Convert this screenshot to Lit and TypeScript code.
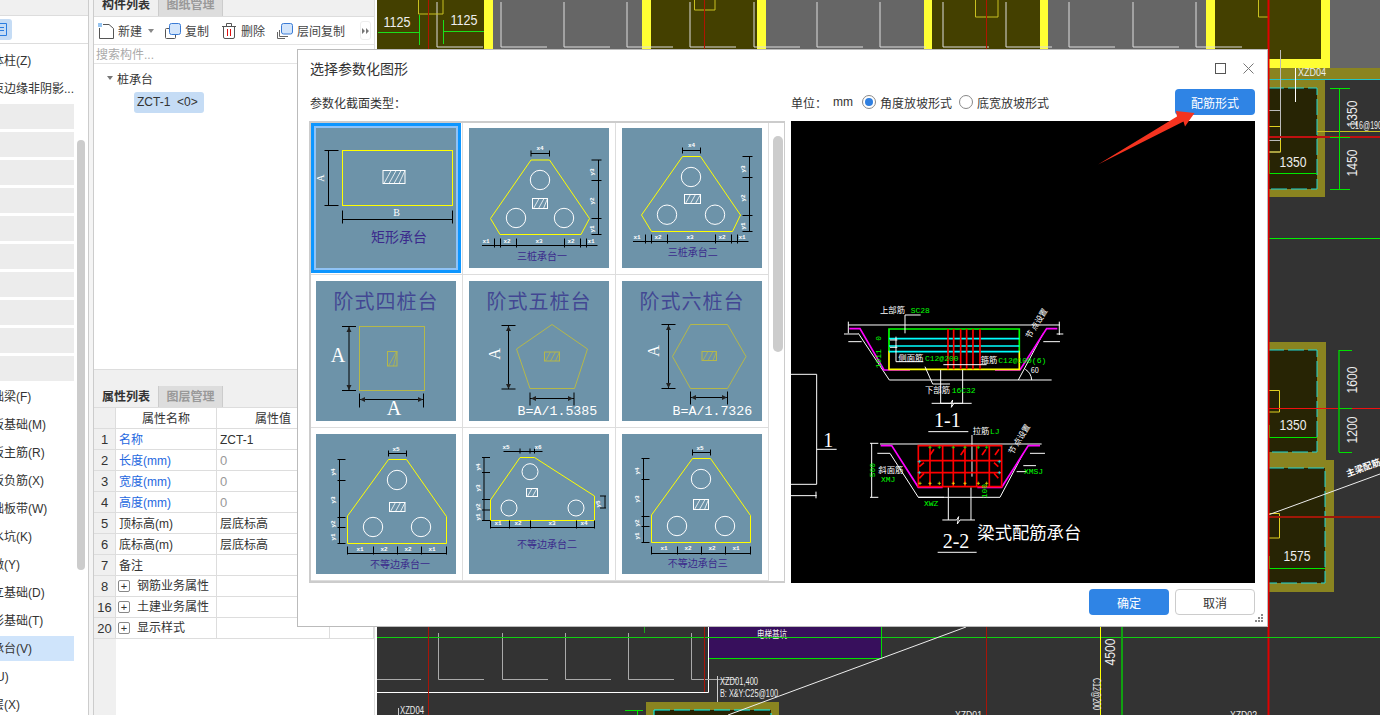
import { LitElement, html, css, svg } from 'lit';
import { customElement } from 'lit/decorators.js';

const NAV_TOP = ['砌体柱(Z)', '约束边缘非阴影...'];
const NAV_BOTTOM = [
  '基础梁(F)', '筏板基础(M)', '筏板主筋(R)', '筏板负筋(X)', '基础板带(W)', '集水坑(K)',
  '柱墩(Y)', '独立基础(D)', '条形基础(T)', '桩承台(V)', '桩(U)', '垫层(X)',
];

const PROPS = [
  { no: 1, name: '名称', value: 'ZCT-1', blue: true },
  { no: 2, name: '长度(mm)', value: '0', blue: true, muted: true },
  { no: 3, name: '宽度(mm)', value: '0', blue: true, muted: true },
  { no: 4, name: '高度(mm)', value: '0', blue: true, muted: true },
  { no: 5, name: '顶标高(m)', value: '层底标高' },
  { no: 6, name: '底标高(m)', value: '层底标高' },
  { no: 7, name: '备注', value: '' },
  { no: 8, name: '钢筋业务属性', value: '', group: true },
  { no: 16, name: '土建业务属性', value: '', group: true },
  { no: 20, name: '显示样式', value: '', group: true },
];

// --- thumbnail drawing helpers, coordinates are inside the 140x140 picture
const hdim = (y: number, x1: number, x2: number, ticks: number[], up = 6, down = 2) => svg`
  <path class="dim" d="M${x1} ${y}H${x2}${ticks.map((t) => `M${t} ${y - up}V${y + down}`).join('')}" />`;
const vdim = (x: number, y1: number, y2: number, ticks: number[], left = 7, right = 3) => svg`
  <path class="dim" d="M${x} ${y1}V${y2}${ticks.map((t) => `M${x - left} ${t}H${x + right}`).join('')}" />`;
const lab = (x: number, y: number, t: string, rot = false) => svg`
  <text class="tiny" x=${x} y=${y} text-anchor="middle" transform=${rot ? `rotate(-90 ${x} ${y})` : ''}>${t}</text>`;
const hatch = (x1: number, y1: number, x2: number, y2: number, color = '#fff') => {
  const h = y2 - y1;
  const lean = h * 0.55;
  let d = '';
  for (let x = x1 + 1; x < x2 - 2; x += 5) {
    d += `M${x} ${y2}L${Math.min(x + lean, x2)} ${y1}`;
  }
  return svg`<rect x=${x1} y=${y1} width=${x2 - x1} height=${h} fill="none" stroke=${color} />
    <path d=${d} fill="none" stroke=${color} stroke-width=".8" />`;
};
const shape = (pts: string, circles: number[][], r = 9.7, color = '#ffff00') => svg`
  <polygon points=${pts} fill="none" stroke=${color} />
  ${circles.map(([x, y]) => svg`<circle cx=${x} cy=${y} r=${r} fill="none" stroke="#fff" />`)}`;
const name = (x: number, y: number, t: string, size = 10) => svg`
  <text class="cn" x=${x} y=${y} text-anchor="middle" style="font-size:${size}px">${t}</text>`;
const steptitle = (t: string) => svg`<text class="step" x="70" y="28" text-anchor="middle">${t}</text>`;
const arrows = (x1: number, y1: number, x2: number, y2: number) => svg`
  <path class="arrow" d=${x1 === x2
    ? `M${x1} ${y1}l-2.5 5h5zM${x2} ${y2}l-2.5 -5h5z`
    : `M${x1} ${y1}l5 -2.5v5zM${x2} ${y2}l-5 -2.5v5z`} />`;

const THUMBS = [
  svg`<rect x="26.5" y="22.5" width="110" height="55" fill="none" stroke="#ffff00" />
    ${hatch(67, 42.5, 89, 55.5)}
    ${vdim(12.5, 22.5, 77.5, [22.5, 77.5], 4, 10)}
    ${hdim(91.5, 26.5, 136.5, [26.5, 136.5], 9, 4)}
    <text class="big" x="5" y="53" transform="rotate(-90 5 50)" style="font-size:10px" text-anchor="middle">A</text>
    <text class="big" x="80.5" y="88" style="font-size:10px" text-anchor="middle">B</text>
    ${name(83, 114, '矩形承台', 14)}`,
  svg`${shape('62,32 80.5,32 120.5,90.5 112,106.5 31,106.5 21.5,90.5', [[71, 52], [47, 90], [95, 90]])}
    ${hatch(63.5, 70.5, 78.5, 80.5)}
    ${hdim(25.5, 62, 80.5, [62, 80.5], 3, 3)}${lab(71, 22, 'x4')}
    ${vdim(129.5, 32, 106.5, [32, 52.5, 90.5, 106.5])}
    ${lab(125, 44, 'y3', true)}${lab(125, 73, 'y2', true)}${lab(125, 101, 'y1', true)}
    ${hdim(117.5, 13, 128.5, [25.5, 31.5, 47.5, 95.5, 111.5, 117.5], 7, 2)}
    ${lab(17, 115, 'x1')}${lab(38, 115, 'x2')}${lab(70, 115, 'x3')}${lab(102, 115, 'x2')}${lab(122, 115, 'x1')}
    ${name(73, 132, '三桩承台一')}`,
  svg`${shape('60.5,28.5 78.5,28.5 118.5,87 110.5,103.5 29.5,103.5 19.5,87', [[69, 49], [45, 86.7], [93, 86.7]])}
    ${hatch(62.5, 66.5, 78.5, 75.5)}
    ${hdim(22.5, 60.5, 78.5, [60.5, 78.5], 3, 3)}${lab(69.5, 19, 'x4')}
    ${vdim(127.5, 28.5, 103.5, [28.5, 49.5, 87.5, 103.5])}
    ${lab(123, 41, 'y3', true)}${lab(123, 70, 'y2', true)}${lab(123, 98, 'y1', true)}
    ${hdim(113.5, 11, 126.5, [23.5, 29.5, 45.5, 93.5, 109.5, 115.5], 7, 2)}
    ${lab(15, 111, 'x1')}${lab(36, 111, 'x2')}${lab(68, 111, 'x3')}${lab(100, 111, 'x2')}${lab(120, 111, 'x1')}
    ${name(70.7, 128, '三桩承台二')}`,
  svg`${steptitle('阶式四桩台')}
    <rect x="43.5" y="45.5" width="65" height="64" fill="none" stroke="#b5b84a" />
    ${hatch(71.5, 70.5, 81, 85, '#b5b84a')}
    ${vdim(33, 45.5, 109.5, [45.5, 109.5], 7, 7)}${arrows(33, 46, 33, 109)}
    ${hdim(118.5, 43.5, 107.5, [43.5, 107.5], 6, 8)}${arrows(44, 118.5, 107, 118.5)}
    <text class="big" x="22" y="81" text-anchor="middle">A</text>
    <text class="big" x="78" y="134" text-anchor="middle">A</text>`,
  svg`${steptitle('阶式五桩台')}
    <polygon points="83,43.5 118.5,68 105.5,107.5 61,107.5 47.5,68" fill="none" stroke="#b5b84a" />
    ${hatch(75.5, 71, 90.5, 80, '#b5b84a')}
    ${vdim(39.5, 44.5, 108, [44.5, 108], 7, 7)}${arrows(39.5, 45, 39.5, 108)}
    ${hdim(117.5, 61, 105, [61, 105], 6, 7)}${arrows(62, 117.5, 104, 117.5)}
    <text class="big" x="25" y="79" transform="rotate(-90 25 73)" text-anchor="middle" style="font-size:16px">A</text>
    <text class="form" x="48.5" y="134">B=A/1.5385</text>`,
  svg`${steptitle('阶式六桩台')}
    <polygon points="68.5,43.5 105.5,43.5 124,75.5 105.5,107.5 68.5,107.5 50.5,75.5" fill="none" stroke="#b5b84a" />
    ${hatch(80, 70.5, 94.5, 79.5, '#b5b84a')}
    ${vdim(46.5, 43.5, 107.5, [43.5, 107.5], 7, 7)}${arrows(46.5, 44, 46.5, 107)}
    ${hdim(116.5, 68.5, 105.5, [68.5, 105.5], 6, 7)}${arrows(69, 116.5, 105, 116.5)}
    <text class="big" x="31" y="76" transform="rotate(-90 31 70)" text-anchor="middle" style="font-size:16px">A</text>
    <text class="form" x="50.5" y="134">B=A/1.7326</text>`,
  svg`${shape('72.5,25.5 90.5,25.5 130.5,82.5 130.5,109.5 31.5,109.5 31.5,82', [[81, 46], [57, 93], [105, 93]])}
    ${hatch(73.5, 68.5, 89, 77.5)}
    ${hdim(19.5, 72.5, 90.5, [72.5, 90.5], 3, 3)}${lab(80, 17, 'x5')}
    ${vdim(23.5, 25.5, 109.5, [25.5, 46.5, 83.5, 93.5, 109.5], 2, 6)}
    ${lab(19, 38, 'y4', true)}${lab(19, 66, 'y3', true)}${lab(19, 90, 'y2', true)}${lab(19, 103, 'y1', true)}
    ${hdim(119.5, 31.5, 130.5, [31.5, 57.5, 81.5, 105.5, 130.5], 7, 1)}
    ${lab(44, 117, 'x1')}${lab(68, 117, 'x2')}${lab(92, 117, 'x2')}${lab(116, 117, 'x1')}
    ${name(84, 134, '不等边承台一')}`,
  svg`${shape('51,23.5 65.5,23.5 125.5,62 125.5,86.5 21.5,86.5 21.5,66', [[61, 37.7], [40, 74], [107, 74]], 8)}
    ${hatch(57.5, 54.5, 68.5, 62.5)}
    ${hdim(17.5, 34.5, 73.5, [51, 61, 65.5], 3, 2)}${lab(37, 15, 'x5')}${lab(69, 15, 'x6')}
    ${vdim(136, 62, 74, [62, 74], 5, 1)}${lab(131, 70, 'y5', true)}
    ${vdim(15, 23.5, 86.5, [23.5, 38.5, 65.5, 76, 86.5], 2, 6)}
    ${lab(11, 33, 'y4', true)}${lab(11, 54, 'y3', true)}${lab(11, 73, 'y2', true)}${lab(11, 83, 'y1', true)}
    ${hdim(93.5, 21.5, 125.5, [21.5, 40.5, 61.5, 107.5, 125.5], 7, 1)}
    ${lab(29, 91, 'x1')}${lab(49, 91, 'x2')}${lab(83, 91, 'x3')}${lab(115, 91, 'x4')}
    ${name(78, 114, '不等边承台二')}`,
  svg`${shape('70.5,24.5 88.5,24.5 128.5,81.5 128.5,108.5 29.5,108.5 29.5,81', [[79, 45], [55, 92], [103, 92]])}
    ${hatch(71.5, 65.5, 86.5, 75.5)}
    ${hdim(18.5, 70.5, 88.5, [70.5, 88.5], 3, 3)}${lab(78, 16, 'x5')}
    ${vdim(21.5, 24.5, 108.5, [24.5, 45.5, 82.5, 92.5, 108.5], 2, 6)}
    ${lab(17, 37, 'y4', true)}${lab(17, 65, 'y3', true)}${lab(17, 89, 'y2', true)}${lab(17, 102, 'y1', true)}
    ${hdim(119.5, 29.5, 128.5, [29.5, 55.5, 79.5, 103.5, 128.5], 7, 1)}
    ${lab(42, 116, 'x1')}${lab(66, 116, 'x2')}${lab(90, 116, 'x2')}${lab(114, 116, 'x1')}
    ${name(75.7, 133, '不等边承台三')}`,
];

// --- rebar preview, drawn in a 3x coordinate space
const W = (x: number, y: number, t: string, size = 25) => svg`
  <text class="pw" x=${x} y=${y} style="font-size:${size}px">${t}</text>`;
const G = (x: number, y: number, t: string) => svg`<text class="pg" x=${x} y=${y}>${t}</text>`;
const GR = (x: number, y: number, t: string) => svg`
  <text class="pg" x=${x} y=${y} transform="rotate(-90 ${x} ${y})">${t}</text>`;
const line = (d: string, color = '#fff', w = 3) => svg`
  <path d=${d} fill="none" stroke=${color} stroke-width=${w} />`;
const crosses = (pts: number[][], color: string) => line(
  pts.map(([x, y]) => `M${x - 5} ${y}H${x + 5}M${x} ${y - 5}V${y + 5}`).join(''), color, 2);

const PREVIEW = svg`
  <g transform="translate(-1 169) scale(.3333)">
    ${line('M0 253H80V583H0M80 478H140M0 617H80M78 605V625')}
    <text class="pn" x="100" y="472">1</text>
    ${line('M175 95V130M808 95V135M175 105H810M162 132H205M800 132H820M175 155H215M760 155H810')}
    ${line('M205 130L298 270H785M760 130L685 270')}
    ${line('M178 116H210L282 240H360M802 116H770L690 240H615', '#ff00ff', 5)}
    ${line('M297 183V117H688V183', '#00ff00', 5)}
    ${line('M297 182V238H688V182', '#ffff00', 5)}
    ${line('M297 146H688M297 168H688M297 185H688', '#00ffff', 5)}
    ${line('M474 117V238M491 117V238M512 117V238M530 117V238M549 117V238M570 117V238', '#ff0000', 5)}
    ${line('M345 130V75H392M318 140V215H400M300 172H322M300 150H322M460 224H590M405 230L428 282H480')}
    ${line('M452 240V340H482L488 330L484 352L492 340H518V240M425 340H545')}
    ${line('M725 270A40 40 0 0 0 706 238')}
    ${W(270, 68, '上部筋')}${G(362, 68, 'SC28')}
    ${W(325, 213, '侧面筋')}${G(405, 213, 'C12@200')}
    ${W(572, 218, '箍筋')}${G(625, 218, 'C12@100(6)')}
    ${W(405, 309, '下部筋')}${G(485, 309, '16C32')}
    ${W(722, 250, '60', 22)}
    ${GR(272, 235, '1011')}${GR(272, 152, '0')}
    <text class="pw" x="720" y="148" transform="rotate(-58 720 148)" style="font-size:24px">节 点设置</text>
    <text class="pn" x="432" y="412">1-1</text>
    ${line('M415 425H535')}
    ${line('M270 462H755M300 490L385 622H630L700 490M262 490H300M720 490H765M240 460H265M240 622H265M245 460V622M700 527H738M680 545H710M385 622H462M475 592V690M543 592V690M457 690H500L506 680L502 702L510 690H555M546 435V560')}
    ${line('M272 467H305L385 592H458M750 467H715L635 592H562', '#ff00ff', 5)}
    ${line('M385 467H635V590H385ZM420 467V590M458 467V590M490 467V590M525 467V590M560 467V590M598 467V590M385 512H635M385 548H635', '#ff0000', 5)}
    ${line('M420 495L432 478M512 495L524 478M576 495L588 478M615 495L627 478M388 530L402 518M388 565L402 550M625 530L612 518M625 565L612 550', '#ff0000', 5)}
    ${crosses([[390, 580], [420, 580], [448, 580], [490, 580], [525, 580], [565, 580], [590, 580]], '#ffff00')}
    ${crosses([[420, 472], [448, 472], [490, 472], [525, 472], [565, 472], [590, 472]], '#00ff00')}
    ${crosses([[388, 515], [388, 548], [628, 515], [628, 548]], '#00ffff')}
    ${W(548, 432, '拉筋')}${G(600, 432, 'LJ')}
    ${W(265, 550, '斜面筋')}${G(273, 575, 'XMJ')}${G(702, 553, 'XMSJ')}${G(402, 648, 'XWZ')}
    ${GR(254, 562, '500')}${GR(590, 625, '100')}
    <text class="pw" x="668" y="495" transform="rotate(-58 668 495)" style="font-size:24px">节 点设置</text>
    <text class="pn" x="458" y="774">2-2</text>
    ${line('M443 787H560')}
    ${W(562, 746, '梁式配筋承台', 52)}
  </g>`;

// --- CAD background, drawn in page coordinates
const LS = [437, 501, 564, 627, 690, 754, 817, 880, 943, 1006, 1069, 1133, 1196];
const olive = (x: number, w: number) => svg`<rect x=${x} y="0" width=${w} height="49" fill="#444000" />`;
const bar = (x: number, w: number) => svg`<rect x=${x} y="0" width=${w} height="49" fill="#ffff33" />`;
const num = (x: number, y: number, t: string, rot = false) => svg`
  <text class="cad" x=${x} y=${y} text-anchor="middle" textLength="27" lengthAdjust="spacingAndGlyphs"
    transform=${rot ? `rotate(-90 ${x} ${y})` : ''}>${t}</text>`;
const dashed = (x: number, y: number, w: number, h: number) => svg`
  <rect x=${x} y=${y} width=${w} height=${h} fill="#272404" stroke="#1fd6d6" stroke-dasharray="16 4" />`;

const CANVAS = svg`
  <rect x="377" y="0" width="1003" height="715" fill="#333" />
  <rect x="493" y="0" width="149" height="49" fill="#666" />
  <rect x="766" y="0" width="158" height="49" fill="#666" />
  <rect x="1048" y="0" width="158" height="49" fill="#666" />
  ${olive(377, 107)}${olive(651, 106)}${olive(932, 108)}${olive(1215, 60)}
  ${bar(484, 9)}${bar(642, 9)}${bar(757, 9)}${bar(924, 8)}${bar(1040, 8)}${bar(1206, 9)}
  <path d=${LS.map((x) => `M${x} 2V47H${x + 46}`).join('')} fill="none" stroke="#ddd" />
  <path d="M418.500 0V14H443V0M694.500 0V10H715V0M975.500 0V17H998V0M1258.500 0V17H1275" fill="none" stroke="#c8c020" />
  <path d="M428.500 0V49M704.500 0V49M986.500 0V49" stroke="#b01400" fill="none" />
  <path d="M378 32.500H419M419.500 15V45M443 31.500H484M443.500 20V44" stroke="#1be01b" fill="none" />
  ${num(397, 27, '1125')}${num(464, 25, '1125')}

  <rect x="1268" y="0" width="112" height="70" fill="#666" />
  <rect x="1268" y="0" width="62" height="68" fill="#ffff33" />
  <rect x="1268" y="0" width="53" height="59" fill="#444000" />
  <rect x="1268" y="68" width="112" height="11" fill="#8a8420" />
  <rect x="1268" y="79" width="57" height="118" fill="#8a8420" />
  <path d="M1268 79.500H1380" stroke="#25c5c5" />
  ${dashed(1268, 88, 49, 101)}
  <path d="M1280.500 50V152H1268M1268 110.500H1280M1268 140.500H1280" stroke="#bbb" fill="none" />
  <path d="M1268 126.500H1280M1280.500 140V152H1268" stroke="#e0d020" fill="none" />
  <path d="M1295.500 68V102" stroke="#fff" />
  <path d="M1317 131.500H1380" stroke="#c8c020" />
  <path d="M1268 173.500H1317M1269.500 160V173" stroke="#00e800" />
  <path d="M1268 137H1380" stroke="#c01010" stroke-width="2" />
  <path d="M1339.500 88V189M1330 88.500H1350M1330 137.500H1350M1330 189.500H1350" stroke="#00e800" fill="none" />
  <text class="cads" x="1298" y="76" textLength="28" lengthAdjust="spacingAndGlyphs">XZD04</text>
  <text class="cads" x="1350" y="129" textLength="32" lengthAdjust="spacingAndGlyphs">C16@190</text>
  ${num(1293, 167, '1350')}
  ${num(1357, 114, '1350', true)}${num(1357, 163, '1450', true)}

  <path d="M1268 238.500H1380" stroke="#00f000" />
  <path d="M1268 342H1326V460H1334V592H1268Z" fill="#8a8420" />
  ${dashed(1268, 350, 49, 102)}${dashed(1268, 468, 57, 115)}
  <path d="M1268 390.500H1279.500V412H1268M1268 513.500H1279.500V538H1268" stroke="#e0d020" fill="none" />
  <path d="M1268 437.500H1317M1268 568.500H1325M1269.500 425V437M1269.500 556V568" stroke="#00e800" fill="none" />
  <path d="M1268 408.500H1380" stroke="#f01010" />
  <path d="M1268 517H1380" stroke="#a01808" stroke-width="2" />
  <path d="M1339 350V452" stroke="#0fa00f" stroke-width="2" />
  <path d="M1339 350.500H1352M1339 408.500H1352M1339 452.500H1352" stroke="#00e000" fill="none" />
  <path d="M1268 515L1380 474" stroke="#eee" />
  <text class="cadb" x="1363" y="471" text-anchor="middle" transform="rotate(-20 1363 467)">主梁配筋</text>
  ${num(1293, 430, '1350')}${num(1297, 561, '1575')}
  ${num(1357, 380, '1600', true)}${num(1357, 430, '1200', true)}
  <path d="M1268.500 0V715" stroke="#e00000" stroke-width="2" />

  <rect x="708" y="627" width="173" height="31" fill="#370f5c" />
  <path d="M708 658.500H881.500V627" stroke="#00e000" fill="none" />
  <text class="cads" x="772" y="638" text-anchor="middle" textLength="30" lengthAdjust="spacingAndGlyphs">电梯基坑</text>
  <path d="M377 692.500H708.500V627" stroke="#fff" fill="none" />
  <path d="M377 679.500H421${LS.slice(0, 5).map((x) => `M${x + 1}.5 633V679.500H${x + 47}`).join('')}" stroke="#aaa" fill="none" />
  <path d="M377 637.500H1380" stroke="#10d010" />
  <path d="M428.500 627V715M704.500 627V692M986.500 627V715" stroke="#a81408" fill="none" />
  <path d="M1100.500 627V715" stroke="#ffff00" />
  <path d="M1122 627V715" stroke="#10a010" stroke-width="2" />
  <path d="M644.500 627V633" stroke="#1baa1b" />
  ${num(1115, 652, '4500', true)}
  <text class="cads" x="1097" y="690" text-anchor="middle" textLength="32" lengthAdjust="spacingAndGlyphs" transform="rotate(90 1093 690)">C12@200</text>
  <path d="M717.500 676V715" stroke="#ccc" />
  <text class="cads" x="720" y="685" textLength="38" lengthAdjust="spacingAndGlyphs">XZD01,400</text>
  <text class="cads" x="720" y="697" textLength="58" lengthAdjust="spacingAndGlyphs">B: X&amp;Y:C25@100</text>
  <path d="M646 702H779V715H646Z" fill="#8a8420" />
  <rect x="654" y="710" width="117" height="10" fill="#272404" stroke="#00ffff" stroke-dasharray="16 4" />
  <path d="M625 710.500H643M637.500 710V715" stroke="#00e800" fill="none" />
  <path d="M966 627L728 715" stroke="#eee" />
  <path d="M398.500 708V715" stroke="#ccc" />
  <text class="cads" x="400" y="714" textLength="24" lengthAdjust="spacingAndGlyphs">XZD04</text>
  <text class="cads" x="1230" y="719" textLength="27" lengthAdjust="spacingAndGlyphs">XZD02</text>
  <text class="cads" x="955" y="719" textLength="27" lengthAdjust="spacingAndGlyphs">XZD01</text>`;

@customElement('app-root')
export class AppRoot extends LitElement {
  static styles = css`
    :host {
      display: block;
      width: 1380px;
      height: 715px;
      position: relative;
      overflow: hidden;
      background: #fff;
      color: #333;
      font: 12px "Liberation Sans", "Noto Sans CJK SC", sans-serif;
    }
    .page {
      display: flex;
      height: 715px;
    }

    /* left nav, scrolled sideways so text is cut at the window edge */
    .nav {
      width: 88px;
      flex: none;
      border-right: 1px solid #ccc;
      position: relative;
      overflow: hidden;
    }
    .nav-top {
      height: 15px;
      background: #f0f0f0;
      border-bottom: 1px solid #ddd;
    }
    .nav-tools {
      height: 27px;
      border-bottom: 1px solid #ddd;
      display: flex;
      align-items: center;
    }
    .nav-btn {
      width: 12px;
      height: 21px;
      background: #c5dcf5;
      border-radius: 0 3px 3px 0;
      display: flex;
      align-items: center;
    }
    .nav-list {
      width: 74px;
      padding-top: 4px;
      display: flex;
      flex-direction: column;
      gap: 3px;
    }
    .nav-item {
      height: 25px;
      line-height: 26px;
      white-space: nowrap;
      overflow: hidden;
    }
    .nav-item span {
      display: block;
      margin-left: -20px;
    }
    .nav-item.empty {
      background: #ececec;
    }
    .nav-item.on {
      background: #cfe4fb;
    }
    .nav-scroll {
      position: absolute;
      left: 77px;
      top: 140px;
      width: 8px;
      height: 430px;
      border-radius: 4px;
      background: #ccc;
    }
    .gutter {
      width: 4px;
      flex: none;
      background: #f4f4f4;
    }

    /* component and property panels */
    .panels {
      width: 280px;
      flex: none;
      border-left: 1px solid #ccc;
      border-right: 1px solid #ddd;
      display: flex;
      flex-direction: column;
      background: #fff;
    }
    .tabs {
      display: flex;
      background: #f0f0f0;
      border-bottom: 1px solid #ddd;
      flex: none;
    }
    .tabs.top {
      height: 16px;
      line-height: 11px;
    }
    .tabs.low {
      height: 21px;
      line-height: 22px;
      padding-top: 1px;
    }
    .tab {
      width: 64px;
      text-align: center;
      font-weight: bold;
      color: #333;
    }
    .tab.off {
      width: 65px;
      background: #ddd;
      color: #999;
      border-left: 1px solid #ccc;
      border-right: 1px solid #ccc;
      box-sizing: border-box;
    }
    .toolbar {
      height: 27px;
      flex: none;
      display: flex;
      align-items: center;
      padding-left: 4px;
      border-bottom: 1px solid #e4e4e4;
      color: #444;
      white-space: nowrap;
    }
    .tool {
      display: flex;
      align-items: center;
      gap: 4px;
      margin-right: 13px;
      flex: none;
    }
    .tool svg {
      flex: none;
    }
    .tool.narrow {
      margin-right: 12px;
    }
    .tool.last {
      margin-right: 15px;
    }
    .caret {
      width: 0;
      height: 0;
      border: 3px solid transparent;
      border-top: 4px solid #888;
      border-bottom: 0;
      margin-left: 2px;
      margin-right: -2px;
    }
    .more {
      width: 11px;
      height: 19px;
      flex: none;
      border: 1px solid #eee;
      border-radius: 3px;
      box-sizing: border-box;
      display: flex;
      align-items: center;
      justify-content: center;
    }
    .search {
      height: 18px;
      line-height: 20px;
      flex: none;
      padding-left: 2px;
      color: #aaa;
      border-bottom: 1px solid #e4e4e4;
    }
    .tree {
      height: 305px;
      flex: none;
      padding: 4px 0 0 13px;
      box-sizing: border-box;
    }
    .tree-root {
      display: flex;
      align-items: center;
      gap: 4px;
      height: 20px;
    }
    .tree-tri {
      width: 0;
      height: 0;
      border: 3px solid transparent;
      border-top: 4px solid #777;
      border-bottom: 0;
    }
    .tree-leaf {
      display: inline-block;
      margin: 4px 0 0 27px;
      width: 70px;
      height: 21px;
      line-height: 21px;
      box-sizing: border-box;
      padding-left: 3px;
      background: #c5dcf5;
      border-radius: 3px;
      white-space: pre;
    }
    .split {
      height: 16px;
      flex: none;
      background: #f0f0f0;
      border-top: 1px solid #ddd;
      box-sizing: border-box;
    }
    .ptable {
      display: grid;
      grid-template-columns: 22px 101px 113px 1fr;
      grid-auto-rows: 21px;
      flex: none;
    }
    .ptable > div {
      border-right: 1px solid #ddd;
      border-bottom: 1px solid #ddd;
      box-sizing: border-box;
      line-height: 22px;
      padding-left: 3px;
      white-space: nowrap;
      overflow: hidden;
    }
    .ptable > .head {
      text-align: center;
      padding: 0;
    }
    .ptable > .no {
      background: #f0f0f0;
      text-align: center;
      padding: 0;
      font-size: 13px;
    }
    .ptable > .blue {
      color: #2468e0;
    }
    .ptable > .muted {
      color: #999;
      font-size: 13px;
    }
    .ptable > .grp {
      display: flex;
      align-items: center;
      gap: 7px;
      padding-left: 2px;
    }
    .plus {
      width: 12px;
      height: 12px;
      flex: none;
      box-sizing: border-box;
      border: 1px solid #888;
      border-radius: 2px;
      display: flex;
      align-items: center;
      justify-content: center;
      line-height: 10px;
      font-size: 11px;
    }
    .pfill {
      flex: 1;
    }
    .pfill i {
      display: block;
      width: 22px;
      height: 100%;
      background: #f0f0f0;
    }
    .cad-wrap {
      flex: 1;
      margin-left: 2px;
    }
    .cad-wrap svg {
      display: block;
    }
    .cad {
      fill: #eee;
      font-size: 15px;
      font-family: "Liberation Sans", sans-serif;
    }
    .cads {
      fill: #eee;
      font-size: 10px;
      font-family: "Liberation Sans", "Noto Sans CJK SC", sans-serif;
    }
    .cadb {
      fill: #fff;
      font-size: 9px;
      font-weight: bold;
      font-family: "Noto Sans CJK SC", sans-serif;
    }

    /* dialog */
    .dialog {
      position: absolute;
      left: 297px;
      top: 49px;
      width: 971px;
      height: 578px;
      box-sizing: border-box;
      background: #fff;
      border: 1px solid #bbb;
      padding: 0 12px 0 11px;
      display: flex;
      flex-direction: column;
    }
    .dlg-title {
      height: 36px;
      flex: none;
      display: flex;
      align-items: center;
      justify-content: space-between;
      font-size: 14px;
      padding: 0 1px 3px;
    }
    .win {
      display: flex;
      gap: 17px;
    }
    .win svg {
      display: block;
    }
    .dlg-row {
      display: grid;
      grid-template-columns: 476px 464px;
      gap: 6px;
      flex: none;
    }
    .dlg-row.opts {
      height: 26px;
      align-items: center;
      margin-bottom: 6px;
    }
    .type-label {
      padding-left: 1px;
    }
    .units {
      display: flex;
      align-items: center;
    }
    .unit-val {
      margin: 0 9px 0 6px;
    }
    .radio {
      width: 14px;
      height: 14px;
      box-sizing: border-box;
      flex: none;
      border: 1px solid #888;
      border-radius: 50%;
      margin-right: 4px;
      display: flex;
      align-items: center;
      justify-content: center;
    }
    .radio i {
      width: 8px;
      height: 8px;
      border-radius: 50%;
      background: #2f7fe0;
    }
    .radio-lbl {
      margin-right: 7px;
    }
    .btn {
      width: 80px;
      height: 26px;
      box-sizing: border-box;
      border-radius: 4px;
      display: flex;
      align-items: center;
      justify-content: center;
      flex: none;
    }
    .btn.pri {
      background: #2f84e5;
      color: #fff;
    }
    .btn.sec {
      border: 1px solid #ccc;
      color: #333;
    }
    .units .btn {
      margin-left: auto;
    }
    .gallery {
      height: 462px;
      box-sizing: border-box;
      border: 2px solid #ccc;
      border-right-width: 1px;
      position: relative;
      overflow: hidden;
    }
    .grid {
      display: grid;
      grid-template-columns: repeat(3, 153px);
      grid-auto-rows: 153px;
      margin: -1px 0 0 -1px;
    }
    .cell {
      box-sizing: border-box;
      padding: 6px;
      border-right: 1px solid #ddd;
      border-bottom: 1px solid #ddd;
    }
    .thumb {
      display: block;
      width: 140px;
      height: 140px;
      background: #6d93a9;
    }
    .thumb.sel {
      box-shadow: 0 0 0 2px #8fc3f7, 0 0 0 5px #0d96ff;
    }
    .dim {
      fill: none;
      stroke: #000;
    }
    .arrow {
      fill: #222;
    }
    .tiny {
      fill: #fff;
      font: bold 6px "Liberation Mono", monospace;
    }
    .cn {
      fill: #3b2a8c;
      font-family: "Noto Sans CJK SC", sans-serif;
    }
    .step {
      fill: #3b3a8f;
      fill-opacity: .85;
      font-size: 20px;
      letter-spacing: 1px;
      font-family: "Noto Sans CJK SC", sans-serif;
    }
    .big {
      fill: #fff;
      font-size: 20px;
      font-family: "Liberation Serif", serif;
    }
    .form {
      fill: #fff;
      font-size: 13.300px;
      font-family: "Liberation Mono", monospace;
    }
    .gal-scroll {
      position: absolute;
      left: 462px;
      top: 13px;
      width: 10px;
      height: 216px;
      border-radius: 5px;
      background: #ccc;
    }
    .preview {
      display: block;
      width: 464px;
      height: 462px;
      background: #000;
    }
    .pw {
      fill: #fff;
      font-family: "Noto Sans CJK SC", sans-serif;
    }
    .pg {
      fill: #00ff00;
      font-size: 24px;
      font-family: "Liberation Mono", monospace;
    }
    .pn {
      fill: #fff;
      font-size: 60px;
      font-family: "Liberation Serif", serif;
    }
    .dlg-foot {
      display: flex;
      justify-content: flex-end;
      gap: 6px;
      margin-top: 6px;
    }
    .grip {
      position: absolute;
      right: 3px;
      bottom: 3px;
      display: block;
    }
    .mark {
      position: absolute;
      left: 1098px;
      top: 110px;
      display: block;
    }
  `;

  render() {
    return html`
      <div class="page">
        ${this.renderNav()}
        <div class="gutter"></div>
        ${this.renderPanels()}
        <div class="cad-wrap">
          <svg width="1003" height="715" viewBox="377 0 1003 715">${CANVAS}</svg>
        </div>
      </div>
      ${this.renderDialog()}
      <svg class="mark" width="98" height="56" viewBox="1098 110 98 56">
        <polygon points="1098,164.500 1177,116.500 1176,111 1194.500,113 1185,126.500 1183.500,121.500" fill="#f5331f" />
      </svg>
    `;
  }

  renderNav() {
    return html`
      <div class="nav">
        <div class="nav-top"></div>
        <div class="nav-tools">
          <div class="nav-btn">
            <svg width="8" height="13" viewBox="0 0 8 13">
              <path d="M0 .5H6.500V12.500H0M0 4.500H4M0 7.500H4" fill="none" stroke="#2a7de0" />
            </svg>
          </div>
        </div>
        <div class="nav-list">
          ${NAV_TOP.map((t) => html`<div class="nav-item"><span>${t}</span></div>`)}
          ${Array.from({ length: 10 }, () => html`<div class="nav-item empty"></div>`)}
          ${NAV_BOTTOM.map((t) => html`<div class="nav-item ${t === '桩承台(V)' ? 'on' : ''}"><span>${t}</span></div>`)}
        </div>
        <div class="nav-scroll"></div>
      </div>
    `;
  }

  renderPanels() {
    return html`
      <div class="panels">
        <div class="tabs top">
          <div class="tab">构件列表</div>
          <div class="tab off">图纸管理</div>
        </div>
        <div class="toolbar">
          <div class="tool">
            <svg width="16" height="16" viewBox="0 0 16 16">
              <path d="M5 1.500H11L15.500 5.500V15.500H1.500V5" fill="none" stroke="#555" />
              <rect x="0" y="0" width="4" height="4" fill="#4a9be8" />
              <path d="M1 0V4M3 0V4M0 1H4M0 3H4" stroke="#fff" stroke-width=".5" />
            </svg>
            <span>新建</span><i class="caret"></i>
          </div>
          <div class="tool">
            <svg width="16" height="16" viewBox="0 0 16 16">
              <path d="M4 5.500H1.500Q.5 5.500 .5 6.500V14.500Q.5 15.500 1.500 15.500H9.500Q10.500 15.500 10.500 14.500V12" fill="none" stroke="#555" />
              <rect x="4.500" y=".5" width="11" height="11" rx="2" fill="#d3e5fb" stroke="#3a7bd5" />
            </svg>
            <span>复制</span>
          </div>
          <div class="tool narrow">
            <svg width="15" height="16" viewBox="0 0 15 16">
              <path d="M0 3.500H14M4.500 3V.5H9.500V3M1.500 3.500V14Q1.500 15.500 3 15.500H11Q12.500 15.500 12.500 14V3.500" fill="none" stroke="#555" />
              <path d="M5.500 6V13M8.500 6V13" stroke="#e01010" />
            </svg>
            <span>删除</span>
          </div>
          <div class="tool last">
            <svg width="16" height="16" viewBox="0 0 16 16">
              <path d="M.5 9V15.500H8M2.500 7V13.500H11" fill="none" stroke="#666" />
              <rect x="4.500" y=".5" width="11" height="10.500" rx="2" fill="#d3e5fb" stroke="#3a7bd5" />
            </svg>
            <span>层间复制</span>
          </div>
          <div class="more">
            <svg width="7" height="6" viewBox="0 0 7 6">
              <path d="M0 0L3 3L0 6ZM4 0L7 3L4 6Z" fill="#777" />
            </svg>
          </div>
        </div>
        <div class="search">搜索构件...</div>
        <div class="tree">
          <div class="tree-root"><i class="tree-tri"></i>桩承台</div>
          <div class="tree-leaf">ZCT-1  &lt;0&gt;</div>
        </div>
        <div class="split"></div>
        <div class="tabs low">
          <div class="tab">属性列表</div>
          <div class="tab off">图层管理</div>
        </div>
        <div class="ptable">
          <div class="no"></div>
          <div class="head">属性名称</div>
          <div class="head">属性值</div>
          <div class="head"></div>
          ${PROPS.map((p) => html`
            <div class="no">${p.no}</div>
            ${p.group
              ? html`<div class="grp"><span class="plus">+</span>${p.name}</div>`
              : html`<div class=${p.blue ? 'blue' : ''}>${p.name}</div>`}
            <div class=${p.muted ? 'muted' : ''}>${p.value}</div>
            <div></div>
          `)}
        </div>
        <div class="pfill"><i></i></div>
      </div>
    `;
  }

  renderDialog() {
    return html`
      <div class="dialog">
        <div class="dlg-title">
          <span>选择参数化图形</span>
          <div class="win">
            <svg width="11" height="11" viewBox="0 0 11 11">
              <rect x=".5" y=".5" width="10" height="10" fill="none" stroke="#555" />
            </svg>
            <svg width="11" height="11" viewBox="0 0 11 11">
              <path d="M.5 .5L10.500 10.500M10.500 .5L.5 10.500" stroke="#777" />
            </svg>
          </div>
        </div>
        <div class="dlg-row opts">
          <div class="type-label">参数化截面类型：</div>
          <div class="units">
            <span>单位：</span><span class="unit-val">mm</span>
            <span class="radio"><i></i></span><span class="radio-lbl">角度放坡形式</span>
            <span class="radio"></span><span>底宽放坡形式</span>
            <div class="btn pri">配筋形式</div>
          </div>
        </div>
        <div class="dlg-row">
          <div class="gallery">
            <div class="grid">
              ${THUMBS.map((t, i) => html`
                <div class="cell">
                  <svg class="thumb ${i === 0 ? 'sel' : ''}" viewBox="0 0 140 140">${t}</svg>
                </div>
              `)}
            </div>
            <div class="gal-scroll"></div>
          </div>
          <svg class="preview" viewBox="0 0 464 462">${PREVIEW}</svg>
        </div>
        <div class="dlg-foot">
          <div class="btn pri">确定</div>
          <div class="btn sec">取消</div>
        </div>
        <svg class="grip" width="9" height="9" viewBox="0 0 9 9">
          <path d="M6 0h2v2h-2zM3 3h2v2h-2zM6 3h2v2h-2zM0 6h2v2h-2zM3 6h2v2h-2zM6 6h2v2h-2z" fill="#888" />
        </svg>
      </div>
    `;
  }
}
